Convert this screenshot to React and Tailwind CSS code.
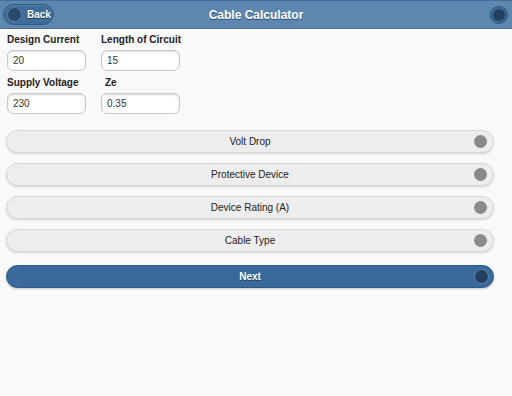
const fields = [
  [
    { label: 'Design Current', value: '20' },
    { label: 'Length of Circuit', value: '15' },
  ],
  [
    { label: 'Supply Voltage', value: '230' },
    { label: 'Ze', value: '0.35', indent: true },
  ],
];

const options = ['Volt Drop', 'Protective Device', 'Device Rating (A)', 'Cable Type'];

export default function App() {
  return (
    <div className="w-[512px] h-[396px] bg-[#f9f9f9] text-[#222]" style={{ fontFamily: '"Liberation Sans", Arial, sans-serif' }}>
      <header className="h-[29px] bg-[#5e87b0] border-t border-[#456f9a] border-b border-b-[#456f9a] flex items-center justify-between px-[3px] relative">
        <button className="h-[21px] w-[51px] rounded-full bg-[#3f6c99] border border-[#2f5a85] flex items-center pl-[4px] gap-[6px] shadow-[inset_0_1px_0_rgba(255,255,255,0.15)]">
          <span className="w-[13px] h-[13px] rounded-full bg-[#2a4a6d] shadow-[0_0_0_1px_rgba(255,255,255,0.1)]" />
          <span className="text-white text-[10px] font-bold [text-shadow:0_1px_0_#234]">Back</span>
        </button>
        <h1 className="absolute left-0 right-0 text-center text-white text-[12px] font-bold pointer-events-none [text-shadow:0_1px_0_#2b4d70]">Cable Calculator</h1>
        <span className="w-[18px] h-[18px] rounded-full bg-[#3c6a97] border border-[#2d567f] flex items-center justify-center mr-[1px]">
          <span className="w-[12px] h-[12px] rounded-full bg-[#253f5e]" />
        </span>
      </header>

      <div className="px-[7px] pt-[3px]">
        {fields.map((row, i) => (
          <div key={i} className="flex gap-[15px] mb-[4px]">
            {row.map((f) => (
              <div key={f.label} className="w-[79px]">
                <div className={`text-[10px] font-bold h-[16px] leading-[16px] whitespace-nowrap ${f.indent ? 'pl-[4px]' : ''}`}>{f.label}</div>
                <div className="mt-[2px] h-[21px] rounded-[6px] border border-[#c8c8c8] bg-white shadow-[inset_0_1px_2px_rgba(0,0,0,0.15)] flex items-center px-[5px] text-[10px] text-[#333]">
                  {f.value}
                </div>
              </div>
            ))}
          </div>
        ))}
      </div>

      <div className="px-[6px] pt-[12px] flex flex-col gap-[10px] w-[500px]">
        {options.map((o) => (
          <div key={o} className="relative h-[23px] rounded-full bg-[#ededed] border border-[#d8d8d8] shadow-[0_1px_2px_rgba(0,0,0,0.15)] flex items-center justify-center text-[10px] text-[#222]">
            {o}
            <span className="absolute right-[6px] top-[4px] w-[13px] h-[13px] rounded-full bg-[#8a8a8a]" />
          </div>
        ))}
        <div className="relative mt-[3px] h-[23px] rounded-full bg-[#3a6a9c] border border-[#2f5b87] shadow-[0_1px_2px_rgba(0,0,0,0.2)] flex items-center justify-center text-[10px] font-bold text-white [text-shadow:0_1px_0_#1e3a5a]">
          Next
          <span className="absolute right-[5px] top-[4px] w-[13px] h-[13px] rounded-full bg-[#253f5e] shadow-[0_0_0_1px_rgba(255,255,255,0.12)]" />
        </div>
      </div>
    </div>
  );
}
